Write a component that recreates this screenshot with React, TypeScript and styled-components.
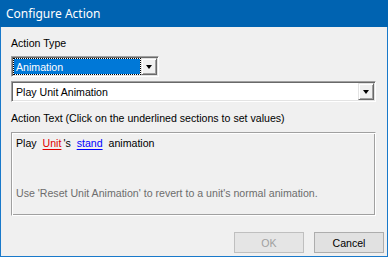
import styled, { createGlobalStyle } from 'styled-components'

const GlobalStyle = createGlobalStyle`
  html, body {
    margin: 0;
    padding: 0;
    background: #f0f0f0;
  }
  * {
    box-sizing: border-box;
  }
`

const Window = styled.div`
  width: 388px;
  height: 257px;
  display: flex;
  flex-direction: column;
  background: #f0f0f0;
  font-family: 'Liberation Sans', Arial, sans-serif;
  font-size: 10.6px;
  color: #000;
  overflow: hidden;
`

const TitleBar = styled.div`
  height: 27px;
  flex-shrink: 0;
  background: #0063b1;
  color: #fff;
  display: flex;
  align-items: center;
  padding: 0 0 1px 6px;
  font-family: 'Noto Sans', 'Open Sans', sans-serif;
  font-size: 12px;
`

const Body = styled.div`
  flex: 1;
  display: flex;
  flex-direction: column;
  padding: 10px 3px 0 10px;
  border: 1px solid #1979ca;
  border-top: none;
`

const Label = styled.div<{ $top?: number }>`
  height: 13px;
  line-height: 13px;
  margin-top: ${p => p.$top ?? 0}px;
`

const Combo = styled.div<{ $width: number; $top: number }>`
  width: ${p => p.$width}px;
  height: 21px;
  margin-top: ${p => p.$top}px;
  display: flex;
  align-items: stretch;
  padding: 1px;
  background: #fff;
  border: 1px solid;
  border-color: #a0a0a0 #fff #fff #a0a0a0;
  box-shadow: inset 1px 1px #696969, inset -1px -1px #e3e3e3;
`

const ComboValue = styled.div<{ $selected?: boolean }>`
  flex: 1;
  display: flex;
  align-items: center;
  padding-left: 2px;
  margin: 1px;
  background: ${p => (p.$selected ? '#0078d7' : '#fff')};
  color: ${p => (p.$selected ? '#fff' : '#000')};
  outline: ${p => (p.$selected ? '1px dotted #000' : 'none')};
  white-space: nowrap;
`

const DropButton = styled.div`
  width: 16px;
  display: flex;
  align-items: center;
  justify-content: center;
  background: #f0f0f0;
  border: 1px solid;
  border-color: #e3e3e3 #696969 #696969 #e3e3e3;
  box-shadow: inset 1px 1px #fff, inset -1px -1px #a0a0a0;
`

const Arrow = styled.div`
  width: 0;
  height: 0;
  border-left: 3.5px solid transparent;
  border-right: 3.5px solid transparent;
  border-top: 4px solid #000;
  margin-top: 1px;
`

const TextPanel = styled.div`
  width: 365px;
  height: 84px;
  margin-top: 7px;
  padding: 4px 4px;
  display: flex;
  flex-direction: column;
  justify-content: space-between;
  border: 1px solid;
  border-color: #a0a0a0 #fff #fff #a0a0a0;
  box-shadow: inset 1px 1px #fff, inset -1px -1px #a0a0a0;
`

const Sentence = styled.div`
  line-height: 13px;
  white-space: nowrap;
  word-spacing: 1px;
`

const Link = styled.span<{ $color: string }>`
  color: ${p => p.$color};
  text-decoration: underline;
  text-underline-offset: 2px;
  margin: 0 2px;
`

const Hint = styled.div`
  color: #6d6d6d;
  line-height: 13px;
  margin-bottom: 11px;
  white-space: nowrap;
`

const ButtonRow = styled.div`
  display: flex;
  justify-content: flex-end;
  gap: 10px;
  margin-top: 16px;
`

const Button = styled.div<{ $disabled?: boolean }>`
  width: 70px;
  height: 21px;
  display: flex;
  align-items: center;
  justify-content: center;
  background: ${p => (p.$disabled ? '#e5e5e5' : '#e1e1e1')};
  border: 1px solid ${p => (p.$disabled ? '#bfbfbf' : '#adadad')};
  color: ${p => (p.$disabled ? '#a0a0a0' : '#000')};
`

export default function App() {
  return (
    <>
      <GlobalStyle />
      <Window>
        <TitleBar>Configure Action</TitleBar>
        <Body>
          <Label>Action Type</Label>
          <Combo $width={148} $top={6}>
            <ComboValue $selected>Animation</ComboValue>
            <DropButton>
              <Arrow />
            </DropButton>
          </Combo>
          <Combo $width={365} $top={4}>
            <ComboValue>Play Unit Animation</ComboValue>
            <DropButton>
              <Arrow />
            </DropButton>
          </Combo>
          <Label $top={10}>Action Text (Click on the underlined sections to set values)</Label>
          <TextPanel>
            <Sentence>
              Play <Link $color="#e00000">Unit</Link>'s <Link $color="#0000ff">stand</Link> animation
            </Sentence>
            <Hint>Use 'Reset Unit Animation' to revert to a unit's normal animation.</Hint>
          </TextPanel>
          <ButtonRow>
            <Button $disabled>OK</Button>
            <Button>Cancel</Button>
          </ButtonRow>
        </Body>
      </Window>
    </>
  )
}
